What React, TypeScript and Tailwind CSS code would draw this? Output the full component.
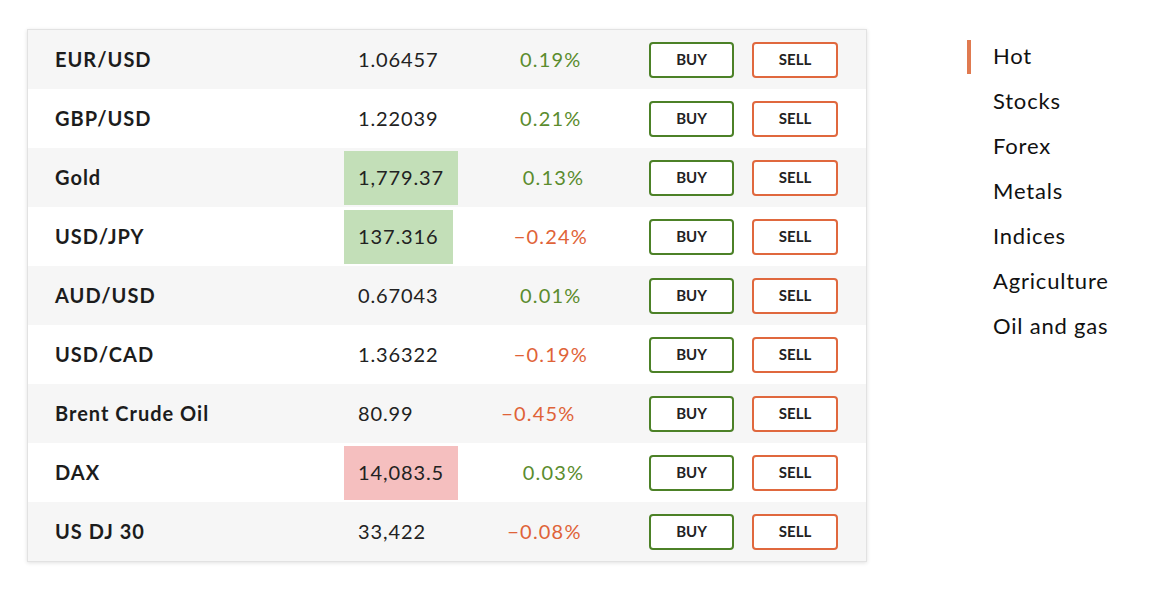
import React from "react";

type Row = {
  name: string;
  price: string;
  change: string;
  up: boolean;
  hl?: "green" | "red";
};

const rows: Row[] = [
  { name: "EUR/USD", price: "1.06457", change: "0.19%", up: true },
  { name: "GBP/USD", price: "1.22039", change: "0.21%", up: true },
  { name: "Gold", price: "1,779.37", change: "0.13%", up: true, hl: "green" },
  { name: "USD/JPY", price: "137.316", change: "\u22120.24%", up: false, hl: "green" },
  { name: "AUD/USD", price: "0.67043", change: "0.01%", up: true },
  { name: "USD/CAD", price: "1.36322", change: "\u22120.19%", up: false },
  { name: "Brent Crude Oil", price: "80.99", change: "\u22120.45%", up: false },
  { name: "DAX", price: "14,083.5", change: "0.03%", up: true, hl: "red" },
  { name: "US DJ 30", price: "33,422", change: "\u22120.08%", up: false },
];

const nav = ["Hot", "Stocks", "Forex", "Metals", "Indices", "Agriculture", "Oil and gas"];

export default function App() {
  return (
    <div
      className="w-[1157px] h-[602px] bg-white flex text-[#1a1a1a]"
      style={{ fontFamily: "Lato, 'Noto Sans', sans-serif" }}
    >
      <div className="ml-[27px] mt-[29px] w-[840px] h-[533px] border border-[#e2e2e2] shadow-[0_1px_4px_rgba(0,0,0,0.12)] flex flex-col">
        {rows.map((r, i) => (
          <div
            key={r.name}
            className={`h-[59px] flex items-center pl-[27px] pr-[28px] ${
              i % 2 === 0 ? "bg-[#f6f6f6]" : "bg-white"
            }`}
          >
            <div className="w-[289px] text-[20px] font-bold text-[#1c1c1c] tracking-[1px] pb-[2px]">{r.name}</div>
            <div
              className={`h-[54px] flex items-center px-[14px] pb-[2px] text-[20px] text-[#222] tracking-[0.9px] ${
                r.hl === "green" ? "bg-[#c3dfb8]" : r.hl === "red" ? "bg-[#f5bfbf]" : ""
              }`}
            >
              {r.price}
            </div>
            <div
              className={`flex-1 text-center text-[20px] tracking-[1.2px] pb-[2px] ${
                r.up ? "text-[#5b8c2e]" : "text-[#df6338]"
              }`}
            >
              {r.change}
            </div>
            <div className="flex gap-[18px]">
              <button className="w-[85px] h-[36px] rounded-[4px] border-2 border-[#4c8127] bg-white text-[15px] font-bold text-[#222] flex items-center justify-center">
                BUY
              </button>
              <button className="w-[86px] h-[36px] rounded-[4px] border-2 border-[#e0683e] bg-white text-[15px] font-bold text-[#222] flex items-center justify-center">
                SELL
              </button>
            </div>
          </div>
        ))}
      </div>
      <div className="ml-[100px] mt-[34px] flex flex-col">
        {nav.map((n, i) => (
          <div key={n} className="h-[45px] flex items-center">
            <div className={`w-[4px] h-[34px] ${i === 0 ? "bg-[#e07a50]" : ""}`} />
            <div className="ml-[22px] text-[22px] text-[#111] tracking-[0.8px] pb-[2px]">{n}</div>
          </div>
        ))}
      </div>
    </div>
  );
}
